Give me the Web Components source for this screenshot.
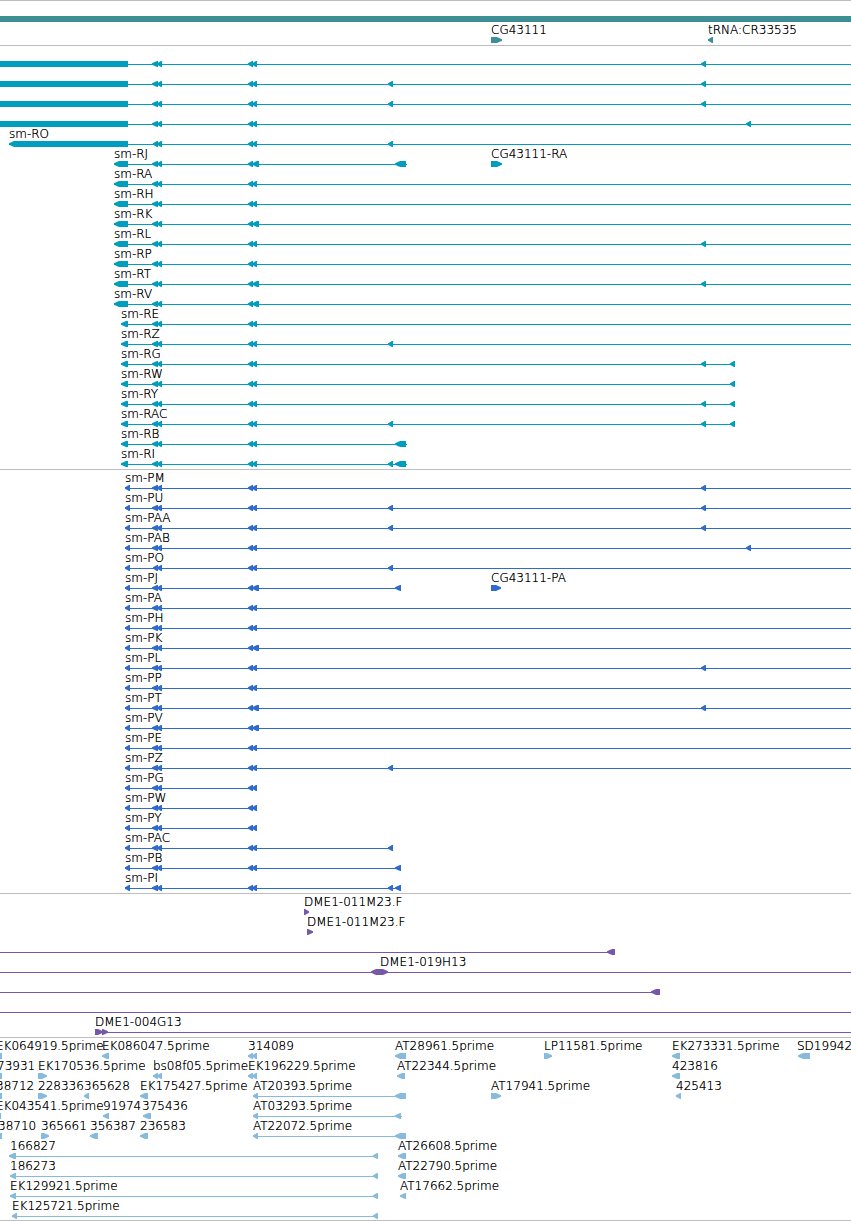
<!DOCTYPE html>
<html lang="en">
<head>
<meta charset="utf-8">
<meta name="viewport" content="width=device-width, initial-scale=1">
<title>Genome browser</title>
<style>
  body {
    margin: 0;
    background: #fff;
    color: #000;
    font: 200 12px/10px "DejaVu Sans Light", "DejaVu Sans", sans-serif;
    /* makes the thin strokes solid enough to read */
    text-shadow: 0 0 0 #000;
  }
</style>
</head>
<body>
<genome-browser></genome-browser>

<script>
// Tracks are listed top to bottom. Every row is a list of features:
//   name, at    label and where it starts
//   line        [from, to] of the thin line, to = END runs off the right side
//   parts       blocks drawn on the line: '<a-b' and '>a-b' point, '=a-b' is plain
const END = Infinity;

const D1 = '<152-158 <157-162';
const D1B = '<153-158 <157-162';
const D2 = '<248-253 <252-257';
const D2W = '<248-253 <252-259';

const f = (name, at, line, ...parts) => ({ name, at, line, parts: parts.join(' ') });

const TRACKS = [
  {
    color: '#3d8f95', gap: 3,
    rows: [
      [f('', 0, null, '=0-END')],
      [f('CG43111', 491, null, '>491-502'), f('tRNA:CR33535', 708, null, '<708-713')],
    ],
  },
  {
    color: '#009dbf',
    rows: [
      [f('', 0, [0, END], '=0-128', D1, D2, '<701-706')],
      [f('', 0, [0, END], '=0-128', D1, D2, '<388-393 <701-706')],
      [f('', 0, [0, END], '=0-128', D1, D2, '<388-393 <701-706')],
      [f('', 0, [0, END], '=0-128', D1, D2, '<746-751')],
      [f('sm-RO', 9, [9, END], '<9-128', D1B, D2, '<388-393')],
      [f('sm-RJ', 114, [114, 407], '<114-128', D1, D2W, '<395-406'), f('CG43111-RA', 491, null, '>491-502')],
      [f('sm-RA', 114, [114, END], '<114-128', D1, D2)],
      [f('sm-RH', 114, [114, END], '<114-128', D1, D2)],
      [f('sm-RK', 114, [114, END], '<114-128', D1, D2W)],
      [f('sm-RL', 114, [114, END], '<114-128', D1, D2, '<701-706')],
      [f('sm-RP', 114, [114, END], '<114-128', D1, D2)],
      [f('sm-RT', 114, [114, END], '<114-128', D1, D2W, '<701-706')],
      [f('sm-RV', 114, [114, END], '<114-128', D1, D2W)],
      [f('sm-RE', 121, [121, END], '<121-128', D1, D2)],
      [f('sm-RZ', 121, [121, END], '<121-128', D1, D2, '<388-393')],
      [f('sm-RG', 121, [121, 735], '<121-128', D1, D2, '<701-706 <730-735')],
      [f('sm-RW', 121, [121, 735], '<121-128', D1, D2, '<730-735')],
      [f('sm-RY', 121, [121, 735], '<121-128', D1, D2, '<701-706 <730-735')],
      [f('sm-RAC', 121, [121, 735], '<121-128', D1, D2, '<388-393 <701-706 <730-735')],
      [f('sm-RB', 121, [121, 407], '<121-128', D1, D2, '<395-406')],
      [f('sm-RI', 121, [121, 407], '<121-128', D1, D2, '<388-393 <395-406')],
    ],
  },
  {
    color: '#2f6bcb',
    rows: [
      [f('sm-PM', 125, [125, END], '<125-130', D1, D2, '<701-706')],
      [f('sm-PU', 125, [125, END], '<125-130', D1, D2, '<388-393 <701-706')],
      [f('sm-PAA', 125, [125, END], '<125-130', D1, D2, '<388-393 <701-706')],
      [f('sm-PAB', 125, [125, END], '<125-130', D1, D2, '<746-751')],
      [f('sm-PO', 125, [125, END], '<125-130', D1B, D2, '<388-393')],
      [f('sm-PJ', 125, [125, 401], '<125-130', D1, D2W, '<395-401'), f('CG43111-PA', 491, null, '>491-501')],
      [f('sm-PA', 125, [125, END], '<125-130', D1, D2)],
      [f('sm-PH', 125, [125, END], '<125-130', D1, D2)],
      [f('sm-PK', 125, [125, END], '<125-130', D1, D2W)],
      [f('sm-PL', 125, [125, END], '<125-130', D1, D2, '<701-706')],
      [f('sm-PP', 125, [125, END], '<125-130', D1, D2)],
      [f('sm-PT', 125, [125, END], '<125-130', D1, D2W, '<701-706')],
      [f('sm-PV', 125, [125, END], '<125-130', D1, D2W)],
      [f('sm-PE', 125, [125, END], '<125-130', D1, D2)],
      [f('sm-PZ', 125, [125, END], '<125-130', D1, D2, '<388-393')],
      [f('sm-PG', 125, [125, 257], '<125-130', D1, D2)],
      [f('sm-PW', 125, [125, 257], '<125-130', D1, D2)],
      [f('sm-PY', 125, [125, 257], '<125-130', D1, D2)],
      [f('sm-PAC', 125, [125, 393], '<125-130', D1, D2, '<388-393')],
      [f('sm-PB', 125, [125, 401], '<125-130', D1, D2, '<395-401')],
      [f('sm-PI', 125, [125, 401], '<125-130', D1, D2, '<388-393 <395-401')],
    ],
  },
  {
    color: '#7757a8',
    rows: [
      [f('DME1-011M23.F', 304, null, '>304-309')],
      [f('DME1-011M23.F', 307, null, '>307-313')],
      [f('', 0, [0, 615], '<607-615')],
      [f('DME1-019H13', 380, [0, END], '<371-380 >379-388')],
      [f('', 0, [0, 660], '<651-660')],
      [f('', 0, [0, END])],
      [f('DME1-004G13', 95, [95, END], '>95-103 >102-108')],
    ],
  },
  {
    color: '#87bbdd',
    rows: [
      [f('EK064919.5prime', -4, null, '=0-2'), f('EK086047.5prime', 102, null, '<102-109'),
        f('314089', 248, null, D2), f('AT28961.5prime', 395, null, '<395-406'),
        f('LP11581.5prime', 544, null, '>544-552'), f('EK273331.5prime', 672, null, '<672-680'),
        f('SD19942', 797, null, '<798-810')],
      [f('73931', -3, null, '=0-2'), f('EK170536.5prime', 38, null, '>38-47'),
        f('bs08f05.5prime', 153, null, D1B), f('EK196229.5prime', 248, null, D2),
        f('AT22344.5prime', 397, null, '<397-405'), f('423816', 672, null, '<672-680')],
      [f('38712', -4, null, '=0-2'), f('228336', 38, null, '>38-47'), f('365628', 84, null, '<84-89'),
        f('EK175427.5prime', 140, null, '<140-148'), f('AT20393.5prime', 253, [253, 406], '<253-258 <395-406'),
        f('AT17941.5prime', 491, null, '>491-501'), f('425413', 676, null, '<676-681')],
      [f('EK043541.5prime', -4, null, '=0-1'), f('91974', 103, null, '<103-109'),
        f('375436', 142, null, '<143-151'), f('AT03293.5prime', 253, [253, 402], '<253-258 <395-401')],
      [f('38710', -2, null, '=0-2'), f('365661', 41, null, '>41-49'), f('356387', 90, null, '<90-98'),
        f('236583', 140, null, '<140-148'), f('AT22072.5prime', 253, [253, 406], '<253-258 <395-406')],
      [f('166827', 10, [9, 378], '<9-16 <373-378'), f('AT26608.5prime', 398, null, '<398-406')],
      [f('186273', 10, [10, 378], '<10-16 <373-378'), f('AT22790.5prime', 398, null, '<398-406')],
      [f('EK129921.5prime', 10, [10, 378], '<10-16 <373-378'), f('AT17662.5prime', 400, null, '<400-406')],
      [f('EK125721.5prime', 12, [12, 378], '<12-17 <373-378')],
    ],
  },
];

// One row: labels on top, the drawn features under them
class FeatureRow extends HTMLElement {
  constructor() {
    super();
    this.attachShadow({ mode: 'open' });
    this.features = [];
  }

  connectedCallback() {
    this.render();
  }

  drawPart(part) {
    const dir = part[0];
    const [a, b] = part.slice(1).split('-').map(v => (v === 'END' ? END : Number(v)));
    if (dir === '=') {
      return `<rect x="${a}" y="0" width="${b === END ? '100%' : b - a}" height="6"/>`;
    }
    const tip = dir === '<' ? a : b;
    const back = dir === '<' ? b : a;
    const s = dir === '<' ? 1 : -1;
    // the nose takes 5px at most, the rest of the block is full height
    const nose = tip + s * Math.min(5, b - a - 1);
    return `<polygon points="${tip},2.2 ${nose},0 ${back},0 ${back},6 ${nose},6 ${tip},3.8"/>`;
  }

  drawLine([from, to]) {
    return `<rect x="${from}" y="3" width="${to === END ? '100%' : to - from}" height="1"/>`;
  }

  render() {
    const labels = this.features.filter(x => x.name)
      .map(x => `<span style="left: ${x.at}px">${x.name}</span>`).join('');
    const shapes = this.features.map(x =>
      (x.line ? this.drawLine(x.line) : '') +
      x.parts.split(' ').filter(Boolean).map(p => this.drawPart(p)).join('')).join('');

    this.shadowRoot.innerHTML = `
      <style>
        :host { display: block; }
        .labels { position: relative; height: 12px; }
        .labels span { position: absolute; top: 0; white-space: nowrap; }
        svg { display: block; width: 100%; height: 6px; fill: var(--track-color); }
      </style>
      <div class="labels">${labels}</div>
      <svg aria-hidden="true">${shapes}</svg>
    `;
  }
}

// A group of rows in one colour with a rule above it
class GenomeTrack extends HTMLElement {
  constructor() {
    super();
    this.attachShadow({ mode: 'open' });
    this.shadowRoot.innerHTML = `
      <style>
        :host {
          display: flex;
          flex-direction: column;
          gap: var(--row-gap, 2px);
          padding: 3px 0 2px;
          border-top: 1px solid #bebebe;
        }
        :host(:last-of-type) {
          padding-bottom: 1px;
          border-bottom: 1px solid #bebebe;
        }
      </style>
      <slot></slot>
    `;
  }
}

class GenomeBrowser extends HTMLElement {
  constructor() {
    super();
    this.attachShadow({ mode: 'open' });
  }

  connectedCallback() {
    this.shadowRoot.innerHTML = `
      <style>
        :host { display: block; overflow: hidden; }
      </style>
    `;
    TRACKS.forEach(data => {
      const track = document.createElement('genome-track');
      track.style.setProperty('--track-color', data.color);
      if (data.gap) track.style.setProperty('--row-gap', data.gap + 'px');
      data.rows.forEach(features => {
        const row = document.createElement('feature-row');
        row.features = features;
        track.append(row);
      });
      this.shadowRoot.append(track);
    });
  }
}

customElements.define('feature-row', FeatureRow);
customElements.define('genome-track', GenomeTrack);
customElements.define('genome-browser', GenomeBrowser);
</script>
</body>
</html>
